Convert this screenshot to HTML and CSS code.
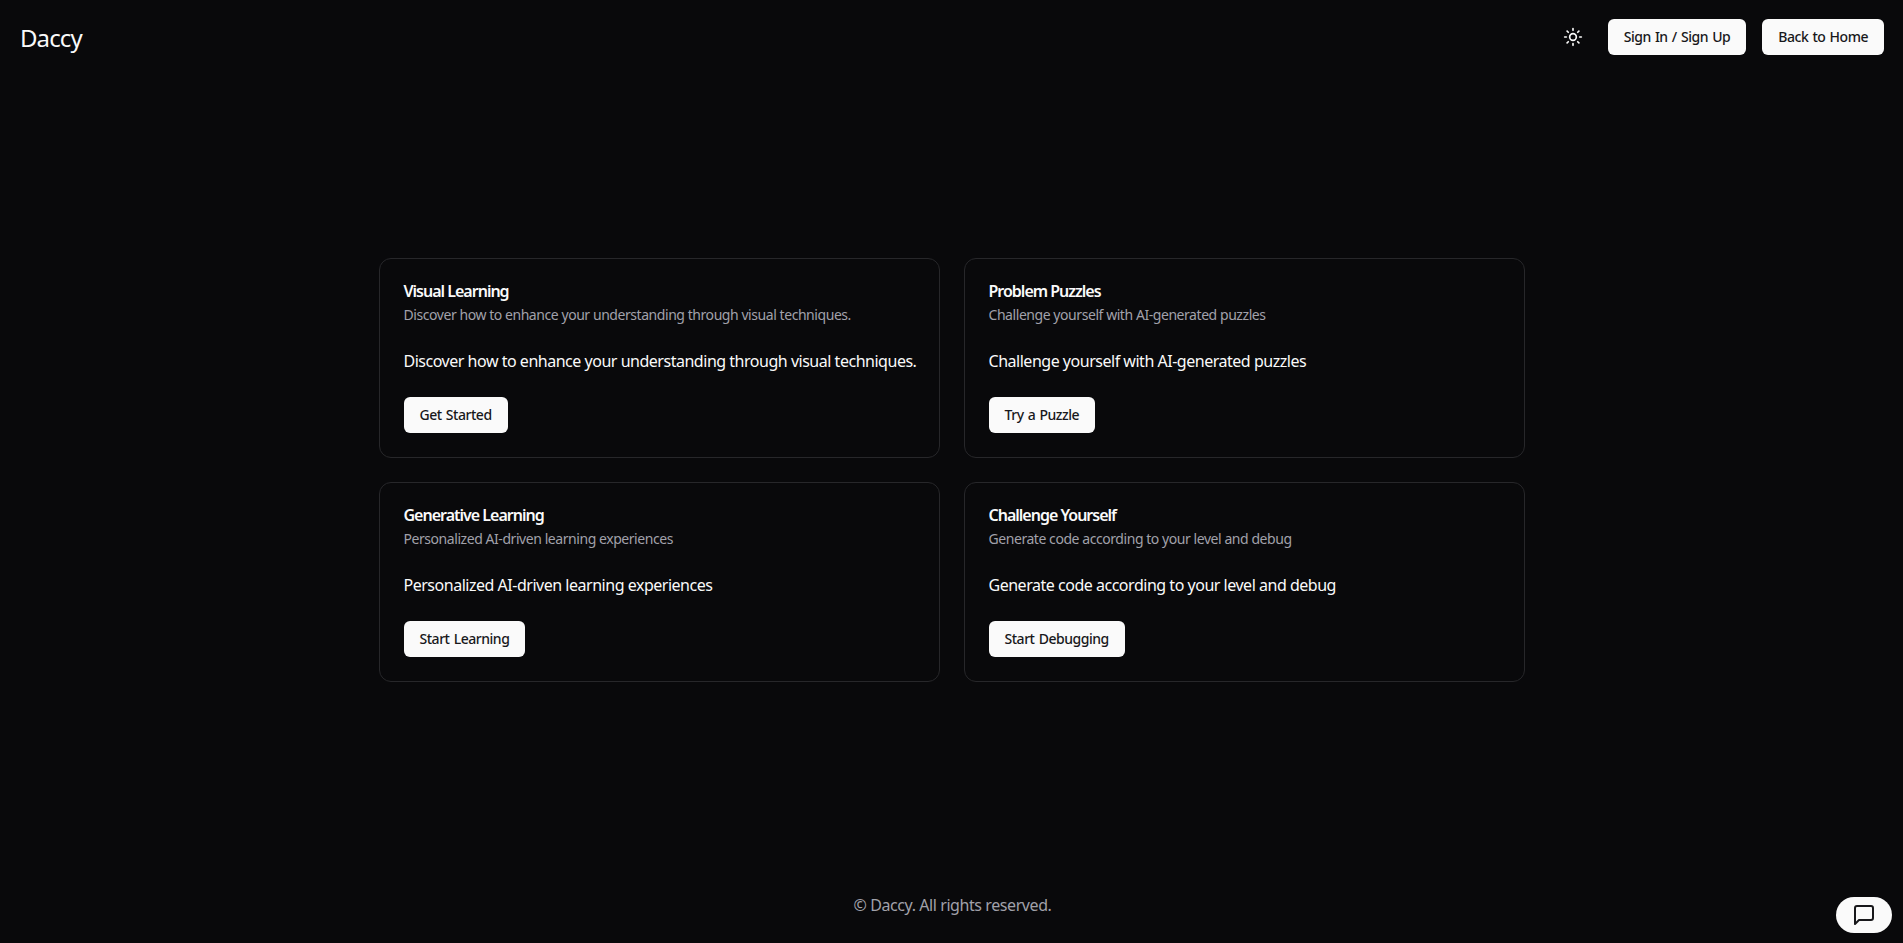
FILE: index.html
```html
<!DOCTYPE html>
<html lang="en">
<head>
<meta charset="utf-8">
<title>Daccy</title>
<link rel="stylesheet" href="styles.css">
</head>
<body>
<div class="page">
  <header class="header">
    <a class="logo">Daccy</a>
    <div class="actions">
      <button class="theme" aria-label="Toggle theme">
        <svg class="sun" viewBox="0 0 24 24" fill="none" stroke="currentColor" stroke-width="2" stroke-linecap="round" stroke-linejoin="round"><circle cx="12" cy="12" r="4"/><path d="M12 2v2"/><path d="M12 20v2"/><path d="m4.93 4.93 1.41 1.41"/><path d="m17.66 17.66 1.41 1.41"/><path d="M2 12h2"/><path d="M20 12h2"/><path d="m6.34 17.66-1.41 1.41"/><path d="m19.07 4.93-1.41 1.41"/></svg>
      </button>
      <button class="btn">Sign In / Sign Up</button>
      <button class="btn">Back to Home</button>
    </div>
  </header>
  <main class="main">
    <div class="grid">
      <section class="card">
        <h2 class="title">Visual Learning</h2>
        <p class="desc">Discover how to enhance your understanding through visual techniques.</p>
        <p class="body">Discover how to enhance your understanding through visual techniques.</p>
        <button class="btn">Get Started</button>
      </section>
      <section class="card">
        <h2 class="title">Problem Puzzles</h2>
        <p class="desc">Challenge yourself with AI-generated puzzles</p>
        <p class="body">Challenge yourself with AI-generated puzzles</p>
        <button class="btn">Try a Puzzle</button>
      </section>
      <section class="card">
        <h2 class="title">Generative Learning</h2>
        <p class="desc">Personalized AI-driven learning experiences</p>
        <p class="body">Personalized AI-driven learning experiences</p>
        <button class="btn">Start Learning</button>
      </section>
      <section class="card">
        <h2 class="title">Challenge Yourself</h2>
        <p class="desc">Generate code according to your level and debug</p>
        <p class="body">Generate code according to your level and debug</p>
        <button class="btn">Start Debugging</button>
      </section>
    </div>
  </main>
  <footer class="footer">© Daccy. All rights reserved.</footer>
</div>
<button class="chat" aria-label="Open chat">
  <svg class="chat-icon" viewBox="0 0 24 24" fill="none" stroke="currentColor" stroke-width="2" stroke-linecap="round" stroke-linejoin="round"><path d="M21 15a2 2 0 0 1-2 2H7l-4 4V5a2 2 0 0 1 2-2h14a2 2 0 0 1 2 2z"/></svg>
</button>
</body>
</html>
```

FILE: styles.css
```css
* { box-sizing: border-box; }
html, body { margin: 0; height: 100%; }
body {
  background: #09090b;
  color: #fafafa;
  font-family: "Noto Sans", "Open Sans", "Liberation Sans", sans-serif;
  overflow: hidden;
}
.page { min-height: 943px; display: flex; flex-direction: column; }
.header {
  height: 73px;
  padding: 0 19px 0 20px;
  display: flex;
  align-items: center;
  justify-content: space-between;
}
.logo { font-size: 24px; line-height: 32px; letter-spacing: -0.9px; position: relative; top: 1px; }
.actions { display: flex; align-items: center; gap: 16px; }
.theme {
  width: 40px; height: 36px; padding: 0; margin-right: -1px;
  background: none; border: 0; color: #fafafa;
  display: flex; align-items: center; justify-content: center;
}
.sun { width: 20px; height: 20px; }
.btn {
  height: 36px;
  padding: 0 16px;
  background: #fafafa;
  color: #18181b;
  border: 0;
  border-radius: 6px;
  font: 500 14px/20px "Noto Sans", "Open Sans", sans-serif;
  letter-spacing: -0.47px;
  word-spacing: 1px;
  white-space: nowrap;
}
.main {
  height: 752px;
  padding-top: 185px;
  display: flex;
  justify-content: center;
}
.grid {
  width: 1146px;
  display: grid;
  grid-template-columns: minmax(0, 1fr) minmax(0, 1fr);
  grid-auto-rows: 200px;
  gap: 24px;
}
.card {
  border: 1px solid #27272a;
  border-radius: 12px;
  padding: 21px 24px 24px;
  background: #09090b;
  display: flex;
  flex-direction: column;
  align-items: flex-start;
}
.title { margin: 0; font-size: 16px; line-height: 23px; font-weight: 600; letter-spacing: -1px; }
.desc { margin: 2px 0 0; font-size: 14px; line-height: 20px; color: #a1a1aa; letter-spacing: -0.44px; white-space: nowrap; }
.body { margin: 24px 0 24px; font-size: 16px; line-height: 24px; letter-spacing: -0.48px; white-space: nowrap; }
.footer { text-align: center; font-size: 16px; line-height: 24px; color: #a1a1aa; letter-spacing: -0.42px; padding: 68px 0 0 2px; }
.chat {
  position: fixed;
  right: 11px;
  bottom: 10px;
  width: 56px; height: 36px;
  padding: 0;
  background: #fafafa;
  color: #18181b;
  border: 0;
  border-radius: 18px;
  display: flex; align-items: center; justify-content: center;
}
.chat-icon { width: 24px; height: 24px; }
```
